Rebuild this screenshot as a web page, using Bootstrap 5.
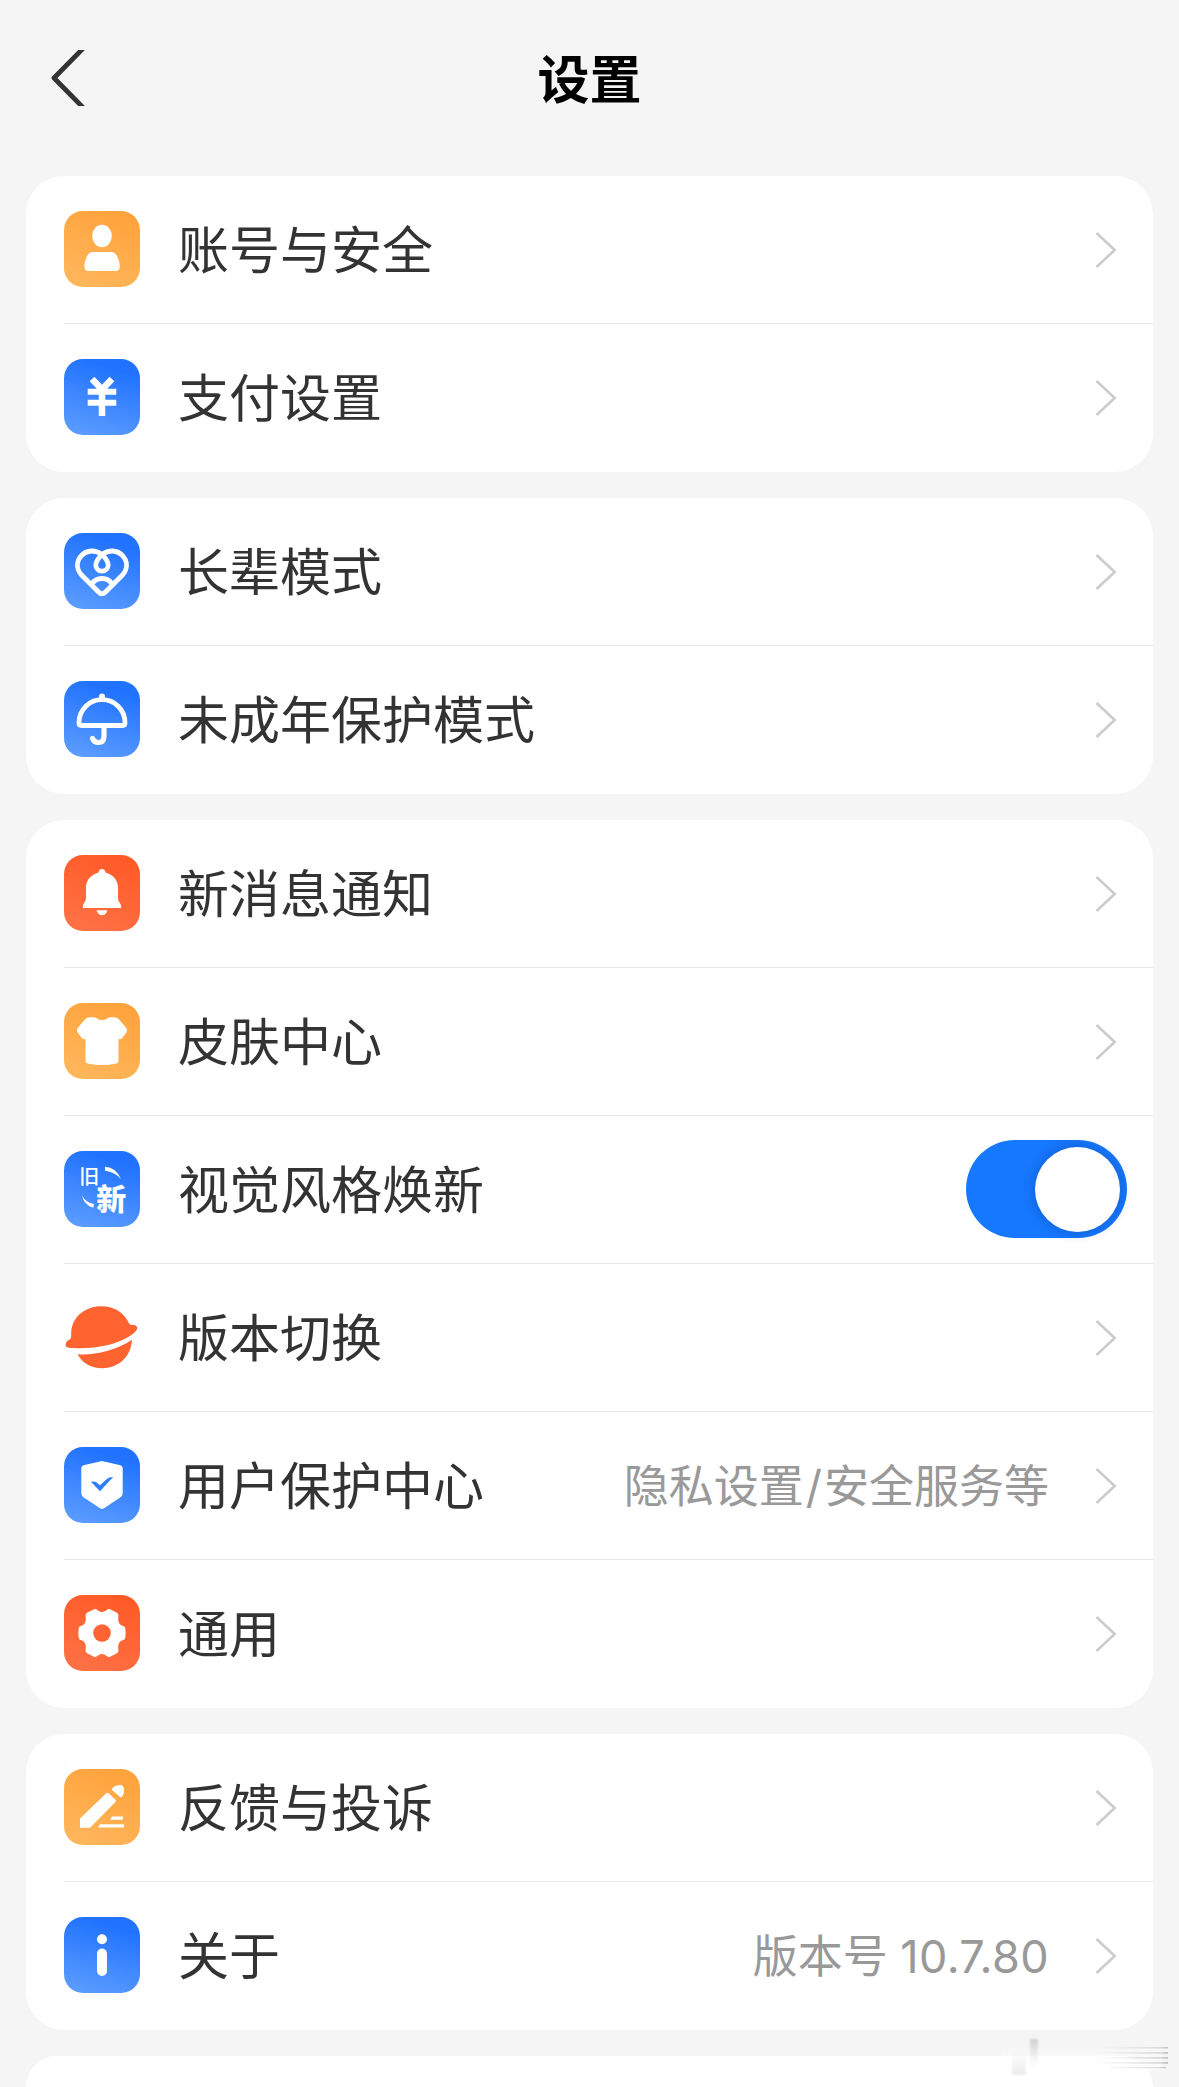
<!DOCTYPE html>
<html lang="zh-CN">
<head>
<meta charset="utf-8">
<meta name="viewport" content="width=device-width, initial-scale=1">
<title>设置</title>
<link href="https://cdn.jsdelivr.net/npm/bootstrap@5.3.0/dist/css/bootstrap.min.css" rel="stylesheet">
<style>
  html, body { height: 2087px; overflow: hidden; }
  body { background: #f5f5f5; color: #333; font-family: "Noto Sans CJK SC", sans-serif; }
  .topbar { height: 176px; padding: 0 50px 20px; }
  .topbar h1 { font-size: 52px; line-height: 60px; font-weight: 700; color: #000; margin-top: -3px; }
  .side { width: 35px; }
  .groups { padding: 0 26px; gap: 26px; }
  .group { border-radius: 38px; background: #fff; overflow: hidden; flex-shrink: 0; }
  .group-cut { height: 31px; border-radius: 38px 38px 0 0; }
  .entry { height: 148px; margin-left: 38px; padding: 0 36px 0 0; border: 0; border-radius: 0; background: transparent; color: #333; box-shadow: inset 0 -1px #e9e9e9; }
  .entry:last-child { box-shadow: none; }
  .entry-icon { width: 76px; height: 76px; margin-right: 38px; margin-top: -2px; flex: none; }
  .entry-label { font-size: 51px; line-height: 60px; margin-top: -6px; }
  .entry-note { font-family: Inter, "Noto Sans CJK SC", sans-serif; font-size: 45px; line-height: 60px; color: #999; margin-right: 46px; margin-top: 2px; }
  .note-slash { margin: 0 2px; }
  .note-version { letter-spacing: .4px; }
  .chev { width: 22px; height: 36px; margin-top: -1px; flex: none; }
  .entry-switch { padding-right: 26px; }
  .entry-switch .form-check-input { width: 161px; height: 98px; margin: -2px 0 0; float: none; border: 0; padding: 6.5px 7px; background: #1677ff; display: flex; justify-content: flex-end; border-radius: 49px; }
  .entry-switch .form-check-input::before { content: ""; width: 85px; height: 85px; border-radius: 50%; background: #fff; box-shadow: 0 0 14px rgba(0,0,0,.22); }
  .trace { position: absolute; left: 1000px; top: 2036px; width: 172px; height: 44px; }
</style>
</head>
<body class="position-relative">
<svg width="0" height="0" class="position-absolute">
  <defs>
    <linearGradient id="gb" x1=".6" y1="0" x2=".3" y2="1"><stop offset=".1" stop-color="#2173ff"/><stop offset="1" stop-color="#5a9bff"/></linearGradient>
    <linearGradient id="go" x1=".7" y1="0" x2=".3" y2="1"><stop offset="0" stop-color="#ffa23c"/><stop offset="1" stop-color="#ffb65a"/></linearGradient>
    <linearGradient id="gr" x1=".7" y1="0" x2=".3" y2="1"><stop offset="0" stop-color="#ff5a26"/><stop offset="1" stop-color="#ff7145"/></linearGradient>
    <symbol id="chev" viewBox="0 0 22 36"><path d="M1.500 1 19.700 18 1.500 35" fill="none" stroke="#ccc" stroke-width="2.600"/></symbol>
  </defs>
</svg>

<header class="topbar d-flex align-items-center justify-content-between">
  <svg class="side" height="56" viewBox="0 0 35 56" fill="none" stroke="#333" stroke-width="4.800"><path d="M33.500-2 4 28l29.500 30" stroke-linejoin="round"/></svg>
  <h1 class="mb-0">设置</h1>
  <span class="side"></span>
</header>

<main class="groups d-flex flex-column">
  <div class="group list-group">
    <a class="entry list-group-item d-flex align-items-center">
      <svg class="entry-icon" viewBox="0 0 76 76"><rect width="76" height="76" rx="19" fill="url(#go)"/><g fill="#fff"><ellipse cx="38" cy="25" rx="9.800" ry="11.200"/><path d="M29 41h18q4.500 0 6.500 5 2.300 5.200 2.300 9 0 5-4 5H24.300q-4 0-4-5 0-3.800 2.300-9 2-5 6.400-5z"/></g></svg>
      <span class="entry-label">账号与安全</span><svg class="chev ms-auto"><use href="#chev"/></svg>
    </a>
    <a class="entry list-group-item d-flex align-items-center">
      <svg class="entry-icon" viewBox="0 0 76 76"><rect width="76" height="76" rx="19" fill="url(#gb)"/><g fill="none" stroke="#fff" stroke-width="6"><path d="M28 20l10 10.500L48 20M38 29v28" stroke-width="6.500"/><path d="M23.700 32.800h28.600M23.700 43.700h28.600"/></g></svg>
      <span class="entry-label">支付设置</span><svg class="chev ms-auto"><use href="#chev"/></svg>
    </a>
  </div>

  <div class="group list-group">
    <a class="entry list-group-item d-flex align-items-center">
      <svg class="entry-icon" viewBox="0 0 76 76"><rect width="76" height="76" rx="19" fill="url(#gb)"/><g fill="none" stroke="#fff" stroke-width="4.800" stroke-linejoin="round"><path d="M38 21.500C31 16.500 23 17 18 22c-6 6.300-6 14 0 20.500L34.500 59q3.500 3.500 7 0L58 42.500c6-6.500 6-14.200 0-20.500-5-5-13-5.500-20-.5z"/><path d="M38 21.500c-3.500 3.500-6.200 7-6.200 10.500a6.200 6.200 0 0 0 12.400 0c0-3.500-2.700-7-6.200-10.500zM28 51c2-3.500 5.500-5.500 10-5.500S46 47.500 48 51"/></g></svg>
      <span class="entry-label">长辈模式</span><svg class="chev ms-auto"><use href="#chev"/></svg>
    </a>
    <a class="entry list-group-item d-flex align-items-center">
      <svg class="entry-icon" viewBox="0 0 76 76"><rect width="76" height="76" rx="19" fill="url(#gb)"/><g fill="none" stroke="#fff" stroke-width="4.800" stroke-linejoin="round" stroke-linecap="round"><path d="M17.500 44.500h41q2.500 0 2.500-2.500C61 28.500 50.500 18.700 38 18.700S15 28.500 15 42q0 2.500 2.500 2.500z"/><path d="M40 45v10q0 6.500-5.500 6.500-4.500 0-6-4" stroke-width="5.200"/><path d="M38 15.500V18" stroke-width="6"/></g></svg>
      <span class="entry-label">未成年保护模式</span><svg class="chev ms-auto"><use href="#chev"/></svg>
    </a>
  </div>

  <div class="group list-group">
    <a class="entry list-group-item d-flex align-items-center">
      <svg class="entry-icon" viewBox="0 0 76 76"><rect width="76" height="76" rx="19" fill="url(#gr)"/><g fill="#fff"><path d="M34.500 17.500q.5-3.500 3.500-3.500t3.500 3.500C49 19.500 54 25 54 33v10q0 3.500 2 5 1.200 1.500 1.200 5H18.800q0-3.500 1.200-5 2-1.500 2-5V33c0-8 5-13.500 12.500-15.500zM32.500 55.200h11q-1.500 5-5.500 5t-5.500-5z"/></g></svg>
      <span class="entry-label">新消息通知</span><svg class="chev ms-auto"><use href="#chev"/></svg>
    </a>
    <a class="entry list-group-item d-flex align-items-center">
      <svg class="entry-icon" viewBox="0 0 76 76"><rect width="76" height="76" rx="19" fill="url(#go)"/><path fill="#fff" d="M26 14.200h4q1.500 0 3 1.200 5 3 10 0 1.500-1.200 3-1.200h4q3 0 5 2l7.500 9q1.500 2 0 4l-4.500 6q-1.800 2-3.500.5V58q0 2-2 2.500-14.500 3.200-29 0-2-.5-2-2.500V35.700q-1.700 1.500-3.500-.5l-4.500-6q-1.500-2 0-4l7.500-9q2-2 5-2z"/></svg>
      <span class="entry-label">皮肤中心</span><svg class="chev ms-auto"><use href="#chev"/></svg>
    </a>
    <div class="entry entry-switch list-group-item d-flex align-items-center">
      <svg class="entry-icon" viewBox="0 0 76 76"><rect width="76" height="76" rx="19" fill="url(#gb)"/><g fill="#fff" font-family="Noto Sans CJK SC, sans-serif"><text x="15.300" y="32.800" font-size="20" font-weight="500">旧</text><text x="32.300" y="59.300" font-size="30" font-weight="900">新</text><path d="M41 15.800q11.500.8 16 12.500-6-7.500-16-8.500zM18 44.500q4 7.500 12 8.500l-.8 3.800Q20 54 18 44.500z"/></g></svg>
      <span class="entry-label">视觉风格焕新</span>
      <div class="form-check form-switch ms-auto p-0 m-0"><input class="form-check-input" type="checkbox" role="switch" checked></div>
    </div>
    <a class="entry list-group-item d-flex align-items-center">
      <svg class="entry-icon" viewBox="0 0 76 76"><g fill="#ff6430"><path d="M7.200 33.500C8 18 21 7.300 37.500 7.300c13.500 0 23 7 27.500 17.200 1 1.500 2 1.500 4 1.500 3 0 5.500 2 3.500 5-2 3.500-7 6.500-14 10C46 47 27 50 9 49c-4 0-7.500 0-7.300-3 .2-3.500 2-4.500 4-5.500 2-1.200 1.300-4 1.500-7z"/><path d="M13.500 55.200c15 1.500 38-3.500 54.500-14.500-1 17-13.500 28.500-30 28.500-11 0-20-5.500-24.500-14z"/></g></svg>
      <span class="entry-label">版本切换</span><svg class="chev ms-auto"><use href="#chev"/></svg>
    </a>
    <a class="entry list-group-item d-flex align-items-center">
      <svg class="entry-icon" viewBox="0 0 76 76"><rect width="76" height="76" rx="19" fill="url(#gb)"/><path fill="#fff" d="M37 14.200q1-.3 2 0L55.500 18q3.200.8 3.200 3.500V46q0 3-2.500 4.500L40 61.200q-2 1.200-4 0L19.800 50.500Q17.300 49 17.300 46V21.500q0-2.700 3.200-3.500z"/><path fill="#2f7cff" d="M27 34.700q4-.5 6 1l3 2.500 6.500-6q2.500-2.300 6.700-2.200L36 44.200z"/></svg>
      <span class="entry-label">用户保护中心</span><span class="entry-note ms-auto">隐私设置<span class="note-slash">/</span>安全服务等</span><svg class="chev"><use href="#chev"/></svg>
    </a>
    <a class="entry list-group-item d-flex align-items-center">
      <svg class="entry-icon" viewBox="0 0 76 76"><rect width="76" height="76" rx="19" fill="url(#gr)"/><path fill="#fff" d="M30 14.200q2-.8 3.300.8 4.700 4 9.400 0 1.300-1.600 3.300-.8l6.500 3.300q2.500 1.300 1.800 4-1 8.500 5 9.500 1.700.3 2 2.300.8 5 0 9.400-.3 2-2 2.300-6 1-5 9.500.7 2.700-1.800 4L46 61.800q-2 .8-3.300-.8-4.700-4-9.400 0-1.300 1.600-3.300.8l-6.500-3.300q-2.500-1.300-1.800-4 1-8.500-5-9.500-1.700-.3-2-2.300-.8-5 0-9.400.3-2 2-2.300 6-1 5-9.500-.7-2.700 1.800-4z"/><circle cx="38" cy="38" r="8.800" fill="#ff6534"/></svg>
      <span class="entry-label">通用</span><svg class="chev ms-auto"><use href="#chev"/></svg>
    </a>
  </div>

  <div class="group list-group">
    <a class="entry list-group-item d-flex align-items-center">
      <svg class="entry-icon" viewBox="0 0 76 76"><rect width="76" height="76" rx="19" fill="url(#go)"/><g fill="#fff"><path d="M16 49.500 42 24.500q1.500-1.300 3 0l6.500 6.300q1 1.200 0 2.200L26 58.800H17q-1 0-1-1zM48.500 19q3-3 6.500-3h1q4 0 4 4.500v2q0 3-2 5.300-1 1-2.200 0L48.500 21.500q-1.300-1.300 0-2.500z"/><path d="M36 55.300h24v3.200H34.200zM48 47.500h11v3.200H46z"/></g></svg>
      <span class="entry-label">反馈与投诉</span><svg class="chev ms-auto"><use href="#chev"/></svg>
    </a>
    <a class="entry list-group-item d-flex align-items-center">
      <svg class="entry-icon" viewBox="0 0 76 76"><rect width="76" height="76" rx="19" fill="url(#gb)"/><g fill="#fff"><circle cx="38" cy="22.300" r="5"/><rect x="33" y="31.500" width="10" height="27.500" rx="5"/></g></svg>
      <span class="entry-label">关于</span><span class="entry-note ms-auto">版本号 <span class="note-version">10.7.80</span></span><svg class="chev"><use href="#chev"/></svg>
    </a>
  </div>

  <div class="group group-cut"></div>
</main>

<svg class="trace" viewBox="0 0 172 44">
  <defs>
    <linearGradient id="t1" x1="0" y1="0" x2="0" y2="1"><stop offset="0" stop-color="#cfcfcf"/><stop offset="1" stop-color="#fafafa" stop-opacity="0"/></linearGradient>
    <linearGradient id="t2" x1="0" y1="0" x2="0" y2="1"><stop offset="0" stop-color="#f5f5f5" stop-opacity="0"/><stop offset="1" stop-color="#ebebeb"/></linearGradient>
    <linearGradient id="t3" x1="0" y1="0" x2="1" y2="0"><stop offset="0" stop-color="#e8e8e8" stop-opacity="0"/><stop offset=".9" stop-color="#d8d8d8"/><stop offset="1" stop-color="#bdbdbd"/></linearGradient>
    <linearGradient id="t4" x1="0" y1="0" x2="0" y2="1"><stop offset="0" stop-color="#fff" stop-opacity="0"/><stop offset="1" stop-color="#fff" stop-opacity=".8"/></linearGradient>
    <filter id="soft" x="-20%" y="-20%" width="140%" height="140%"><feGaussianBlur stdDeviation="1"/></filter>
    <filter id="faint" x="-5%" y="-20%" width="110%" height="140%"><feGaussianBlur stdDeviation=".5"/></filter>
  </defs>
  <rect x="2" y="8" width="160" height="26" fill="url(#t4)" filter="url(#soft)"/>
  <g filter="url(#soft)"><rect x="12" y="10" width="14" height="29" fill="url(#t2)"/><rect x="30" y="3" width="8" height="33" fill="url(#t1)"/></g>
  <path filter="url(#faint)" fill="url(#t3)" d="M96 11h72v1.500H96zM92 16h76v1.800H92zM92 21h76v1.800H92zM92 26h76v1.800H92zM110 31h56v1.200h-56z"/>
</svg>
<script src="https://cdn.jsdelivr.net/npm/bootstrap@5.3.0/dist/js/bootstrap.bundle.min.js"></script>
</body>
</html>
